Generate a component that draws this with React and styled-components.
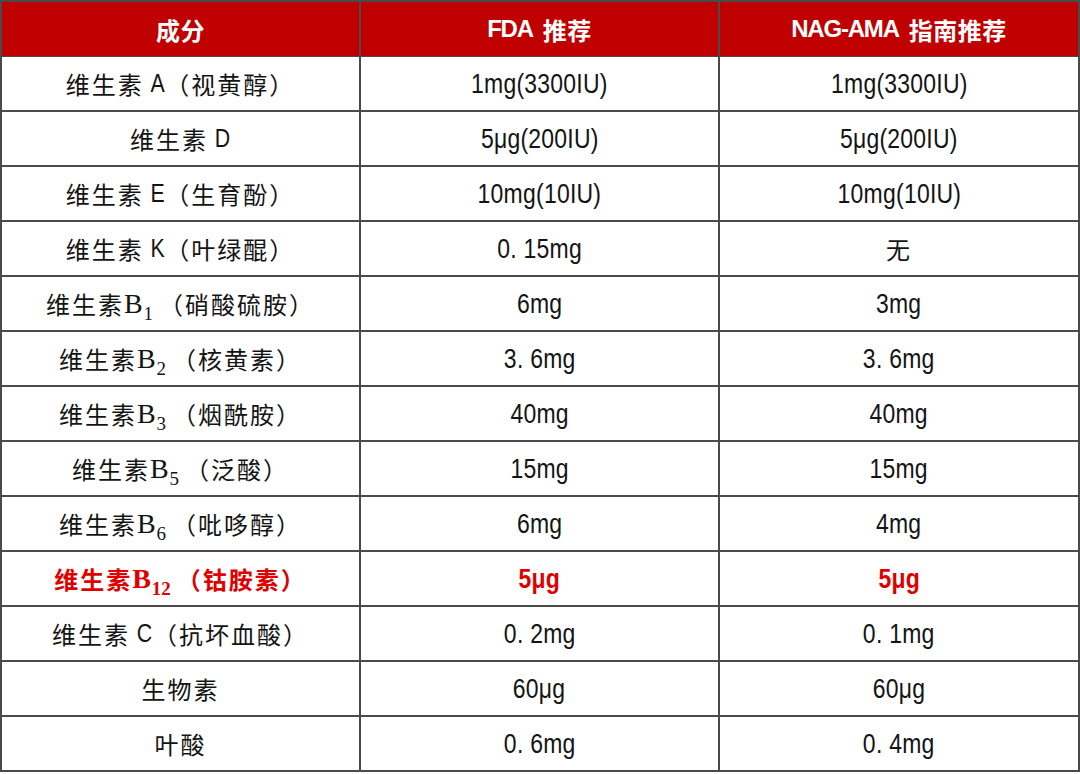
import React from "react";
import styled, { createGlobalStyle } from "styled-components";

const Global = createGlobalStyle`
  html, body { margin: 0; padding: 0; background: #ffffff; }
  body { font-family: "Noto Sans CJK SC", "Noto Sans", sans-serif; }
`;

const Table = styled.div`
  width: 1080px;
  box-sizing: border-box;
  display: grid;
  grid-template-columns: 357px 357px 358px;
  grid-auto-rows: 53px;
  gap: 2px;
  padding: 2px;
  background: #4a4a4a;
`;

const HeadCell = styled.div`
  height: 54px;
  background: #c00000;
  color: #ffffff;
  display: flex;
  align-items: center;
  justify-content: center;
  font-family: "Noto Sans CJK SC", sans-serif;
  font-weight: 700;
  font-size: 24px;
  letter-spacing: 0.5px;
`;

const HeadLatin = styled.span`
  font-family: "Liberation Sans", sans-serif;
  font-weight: 700;
  font-size: 24px;
  letter-spacing: -1.2px;
  margin-right: 10px;
`;

const Cell = styled.div`
  background: #ffffff;
  display: flex;
  align-items: center;
  justify-content: center;
  color: ${(p) => (p.$hl ? "#e00000" : "#141414")};
  font-weight: ${(p) => (p.$hl ? 700 : 400)};
  white-space: nowrap;
`;

const Name = styled.span`
  font-family: "Noto Sans CJK SC", sans-serif;
  font-size: 24px;
  letter-spacing: 2px;
`;

const Letter = styled.span`
  display: inline-block;
  font-family: "Liberation Sans", sans-serif;
  font-size: 26px;
  transform: scaleX(0.82);
  margin: 0 -1px 0 5px;
`;

const Vit = styled.span`
  font-family: "Liberation Serif", serif;
  font-size: 28px;
  letter-spacing: 0;
  margin-right: 6px;
`;

const Sub = styled.sub`
  font-family: "Liberation Serif", serif;
  font-size: 19px;
  vertical-align: -7px;
  line-height: 0;
  margin-left: 1px;
`;

const Value = styled.span`
  display: inline-block;
  font-family: "Liberation Sans", "Noto Sans CJK SC", sans-serif;
  font-size: 28px;
  transform: scaleX(0.82);
  letter-spacing: 0.3px;
`;

const rows = [
  { pre: "维生素", letter: "A", paren: "（视黄醇）", fda: "1mg(3300IU)", nag: "1mg(3300IU)" },
  { pre: "维生素", letter: "D", paren: "", fda: "5μg(200IU)", nag: "5μg(200IU)" },
  { pre: "维生素", letter: "E", paren: "（生育酚）", fda: "10mg(10IU)", nag: "10mg(10IU)" },
  { pre: "维生素", letter: "K", paren: "（叶绿醌）", fda: "0. 15mg", nag: "无" },
  { pre: "维生素", b: "1", paren: "（硝酸硫胺）", fda: "6mg", nag: "3mg" },
  { pre: "维生素", b: "2", paren: "（核黄素）", fda: "3. 6mg", nag: "3. 6mg" },
  { pre: "维生素", b: "3", paren: "（烟酰胺）", fda: "40mg", nag: "40mg" },
  { pre: "维生素", b: "5", paren: "（泛酸）", fda: "15mg", nag: "15mg" },
  { pre: "维生素", b: "6", paren: "（吡哆醇）", fda: "6mg", nag: "4mg" },
  { pre: "维生素", b: "12", paren: "（钴胺素）", fda: "5μg", nag: "5μg", hl: true },
  { pre: "维生素", letter: "C", paren: "（抗坏血酸）", fda: "0. 2mg", nag: "0. 1mg" },
  { pre: "生物素", paren: "", fda: "60μg", nag: "60μg" },
  { pre: "叶酸", paren: "", fda: "0. 6mg", nag: "0. 4mg" },
];

function renderValue(v) {
  if (v === "无") return <Name>无</Name>;
  return <Value>{v}</Value>;
}

export default function App() {
  return (
    <>
      <Global />
      <Table>
        <HeadCell>成分</HeadCell>
        <HeadCell>
          <HeadLatin>FDA</HeadLatin>推荐
        </HeadCell>
        <HeadCell>
          <HeadLatin>NAG-AMA</HeadLatin>指南推荐
        </HeadCell>
        {rows.map((r, i) => (
          <React.Fragment key={i}>
            <Cell $hl={r.hl}>
              <Name>{r.pre}</Name>
              {r.letter && <Letter>{r.letter}</Letter>}
              {r.b && (
                <Vit>
                  B<Sub>{r.b}</Sub>
                </Vit>
              )}
              {r.paren && <Name>{r.paren}</Name>}
            </Cell>
            <Cell $hl={r.hl}>{renderValue(r.fda)}</Cell>
            <Cell $hl={r.hl}>{renderValue(r.nag)}</Cell>
          </React.Fragment>
        ))}
      </Table>
    </>
  );
}
